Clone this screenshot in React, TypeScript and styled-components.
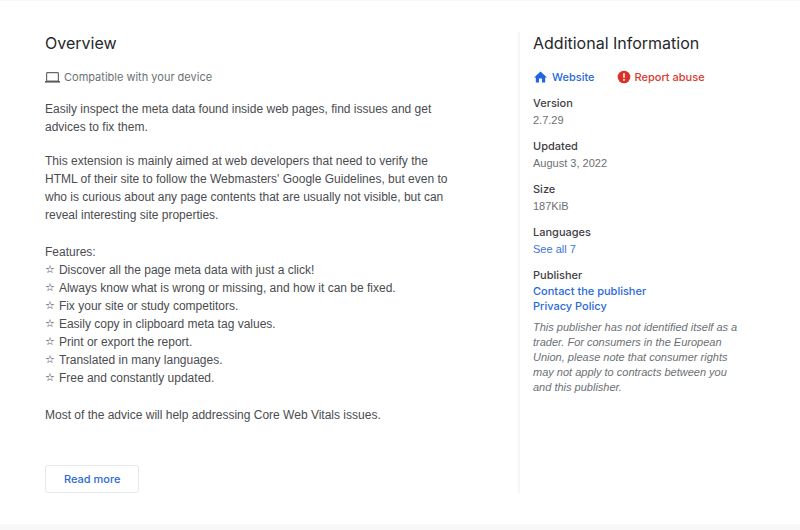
import React from "react";
import styled, { createGlobalStyle } from "styled-components";

const GlobalStyle = createGlobalStyle`
  *, *::before, *::after { box-sizing: border-box; }
  body {
    margin: 0;
    background: #fff;
    color: #4a4c50;
    font-family: "Liberation Sans", Arial, sans-serif;
    font-size: 12px;
  }
  h2, h3, p, ul, dl, dd { margin: 0; padding: 0; }
`;

const sans = `Inter, "Open Sans", sans-serif`;

const Page = styled.div`
  display: flex;
  flex-direction: column;
  min-height: 100vh;
  border-top: 1px solid #f8f8f8;
`;

const Columns = styled.div`
  flex: 1;
  display: flex;
  align-items: stretch;
  padding: 31px 48px 31px 45px;
`;

const Main = styled.main`
  flex: 1;
  display: flex;
  flex-direction: column;
  align-items: flex-start;
  padding-right: 62px;
`;

const Side = styled.aside`
  flex: 0 1 234px;
  border-left: 2px solid #f6f6f7;
  padding: 0 8px 0 13px;
`;

const Title = styled.h2`
  font-family: ${sans};
  font-size: 16px;
  font-weight: 400;
  line-height: 22px;
  color: #26282b;
`;

const Compatible = styled.p`
  display: flex;
  align-items: center;
  gap: 4px;
  margin-top: 15px;
  font-family: ${sans};
  font-size: 11px;
  line-height: 16px;
  color: #6c7074;
`;

const Description = styled.div`
  display: flex;
  flex-direction: column;
  gap: 16px;
  margin-top: 15px;
  line-height: 18px;
`;

const Features = styled.section`
  padding: 3px 0;
`;

const List = styled.ul`
  list-style: none;
`;

const Item = styled.li`
  display: flex;
  align-items: center;
  gap: 4px;
`;

const ReadMore = styled.button`
  margin-top: auto;
  height: 28px;
  padding: 0 18px;
  border: 1px solid #e6e8ec;
  border-radius: 3px;
  background: #fff;
  color: #2a69d8;
  font-family: ${sans};
  font-size: 11px;
  font-weight: 500;
  cursor: pointer;
`;

const Actions = styled.div`
  display: flex;
  gap: 22px;
  margin-top: 15px;
`;

const Link = styled.a<{ $tone?: "alert" }>`
  display: flex;
  align-items: center;
  gap: 4px;
  color: ${(p) => (p.$tone === "alert" ? "#d93a30" : "#2a69d8")};
  font-family: ${sans};
  font-size: 11px;
  font-weight: 500;
  line-height: 16px;
  text-decoration: none;
`;

const Details = styled.dl`
  display: flex;
  flex-direction: column;
  gap: 8px;
  margin-top: 9px;
`;

const Term = styled.dt`
  font-family: ${sans};
  font-size: 11px;
  font-weight: 500;
  line-height: 18px;
  color: #3f4145;
`;

const Value = styled.dd`
  font-size: 11px;
  line-height: 17px;
  color: #6c7074;
`;

const PlainLink = styled.a`
  color: #3b74d8;
  text-decoration: none;
`;

const PublisherLink = styled(Link)`
  line-height: 15px;
`;

const Notice = styled.p`
  margin-top: 6px;
  font-size: 11px;
  font-style: italic;
  line-height: 15px;
  color: #6c7074;
`;

const Footer = styled.footer`
  height: 6px;
  background: #f8f8f9;
`;

const LaptopIcon = () => (
  <svg width="15" height="14" viewBox="0 0 15 14" fill="none" aria-hidden="true">
    <rect x="1.6" y="2.6" width="11.8" height="8.4" rx="0.8" stroke="#666a6e" strokeWidth="1.2" />
    <path d="M0 11h15v1.6H0z" fill="#56595e" />
  </svg>
);

const HomeIcon = () => (
  <svg width="15" height="16" viewBox="0 0 15 16" aria-hidden="true">
    <path d="M7.5 2.5 14 8.5h-1.8v5H9V9.6H6v3.9H2.8v-5H1z" fill="#2268dc" />
  </svg>
);

const AlertIcon = () => (
  <svg width="14" height="16" viewBox="0 0 14 16" aria-hidden="true">
    <circle cx="7" cy="8" r="6.3" fill="#dc3127" />
    <path d="M6.2 4.3h1.6v4.5H6.2zM6.2 10h1.6v1.7H6.2z" fill="#fff" />
  </svg>
);

const features = [
  "Discover all the page meta data with just a click!",
  "Always know what is wrong or missing, and how it can be fixed.",
  "Fix your site or study competitors.",
  "Easily copy in clipboard meta tag values.",
  "Print or export the report.",
  "Translated in many languages.",
  "Free and constantly updated.",
];

const Star = styled.span`
  font-family: "DejaVu Sans", sans-serif;
  font-size: 11px;
  color: #303236;
`;

const facts = [
  ["Version", "2.7.29"],
  ["Updated", "August 3, 2022"],
  ["Size", "187KiB"],
];

export default function App() {
  return (
    <>
      <GlobalStyle />
      <Page>
        <Columns>
          <Main>
            <Title>Overview</Title>
            <Compatible>
              <LaptopIcon />
              Compatible with your device
            </Compatible>
            <Description>
              <p>
                Easily inspect the meta data found inside web pages, find issues and get advices to
                fix them.
              </p>
              <p>
                This extension is mainly aimed at web developers that need to verify the HTML of
                their site to follow the Webmasters' Google Guidelines, but even to who is curious
                about any page contents that are usually not visible, but can reveal interesting
                site properties.
              </p>
              <Features>
                <p>Features:</p>
                <List>
                  {features.map((text) => (
                    <Item key={text}>
                      <Star>☆</Star>
                      {text}
                    </Item>
                  ))}
                </List>
              </Features>
              <p>Most of the advice will help addressing Core Web Vitals issues.</p>
            </Description>
            <ReadMore type="button">Read more</ReadMore>
          </Main>
          <Side>
            <Title>Additional Information</Title>
            <Actions>
              <Link href="#website">
                <HomeIcon />
                Website
              </Link>
              <Link href="#report" $tone="alert">
                <AlertIcon />
                Report abuse
              </Link>
            </Actions>
            <Details>
              {facts.map(([term, value]) => (
                <div key={term}>
                  <Term>{term}</Term>
                  <Value>{value}</Value>
                </div>
              ))}
              <div>
                <Term>Languages</Term>
                <Value>
                  <PlainLink href="#languages">See all 7</PlainLink>
                </Value>
              </div>
              <div>
                <Term>Publisher</Term>
                <Value>
                  <PublisherLink href="#contact">Contact the publisher</PublisherLink>
                  <PublisherLink href="#privacy">Privacy Policy</PublisherLink>
                  <Notice>
                    This publisher has not identified itself as a trader. For consumers in the
                    European Union, please note that consumer rights may not apply to contracts
                    between you and this publisher.
                  </Notice>
                </Value>
              </div>
            </Details>
          </Side>
        </Columns>
        <Footer />
      </Page>
    </>
  );
}
